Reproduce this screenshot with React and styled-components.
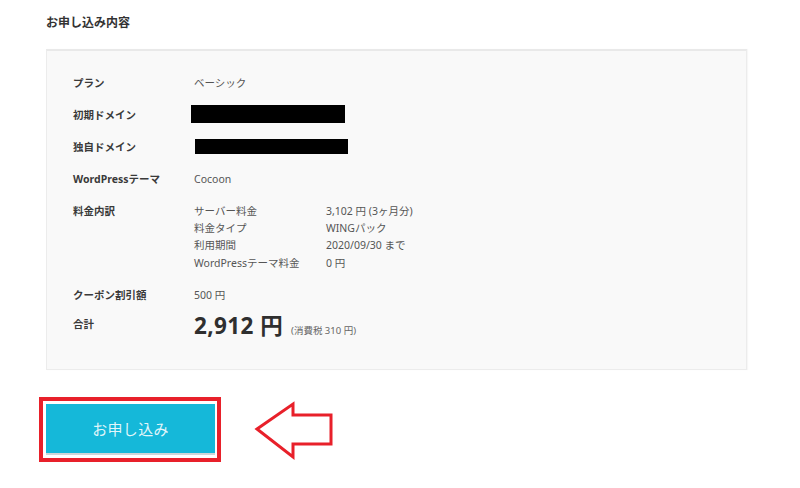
import React from "react";
import styled, { createGlobalStyle } from "styled-components";

const Global = createGlobalStyle`
  html, body { margin: 0; padding: 0; background: #fff; }
  body { font-family: "Noto Sans", "Noto Sans CJK JP", sans-serif; color: #333; }
`;

const Page = styled.div`
  width: 800px;
  height: 488px;
  box-sizing: border-box;
  padding: 14px 0 0 46px;
  overflow: hidden;
`;

const Title = styled.h2`
  margin: 0;
  font-size: 12px;
  line-height: 18px;
  font-weight: 700;
  color: #333;
`;

const Panel = styled.section`
  margin-top: 17px;
  width: 701px;
  box-sizing: border-box;
  background: #f9f9f9;
  border: 1px solid #ececec;
  border-top: 2px solid #e9e9e9;
  padding: 23px 0 28px 26px;
  display: flex;
  flex-direction: column;
  gap: 14px;
  box-shadow: 1px 0 1px rgba(0, 0, 0, 0.03);
`;

const Row = styled.div`
  display: flex;
  align-items: ${(p) => (p.$top ? "flex-start" : "center")};
  min-height: 18px;
  margin-top: ${(p) => p.$mt || 0}px;
`;

const Label = styled.div`
  width: 121px;
  flex: none;
  font-size: 10.5px;
  line-height: 18px;
  font-weight: 700;
  color: #3a3a3a;
`;

const Value = styled.div`
  font-size: 10.5px;
  line-height: 18px;
  color: #555;
`;

const Redacted = styled.div`
  background: #000;
  width: ${(p) => p.$w}px;
  height: ${(p) => p.$h}px;
  margin-left: ${(p) => p.$dx}px;
  margin-top: ${(p) => p.$dy}px;
`;

const Breakdown = styled.div`
  display: grid;
  grid-template-columns: 132px auto;
  font-size: 10.5px;
  line-height: 17.4px;
  color: #555;
  margin-top: 0.5px;
`;

const Total = styled.div`
  display: flex;
  align-items: baseline;
  margin-top: -4px;
  color: #2f2f2f;
`;

const Price = styled.span`
  font-size: 22.5px;
  line-height: 30px;
  font-weight: 700;
  letter-spacing: 0.4px;
`;

const Tax = styled.span`
  font-size: 9.5px;
  color: #666;
  margin-left: 8px;
`;

const ActionRow = styled.div`
  display: flex;
  align-items: flex-start;
  gap: 31px;
  margin-top: 27px;
  margin-left: -7px;
`;

const Highlight = styled.div`
  border: 4px solid #e8202a;
  padding: 3px 2px 3px 3px;
  background: #fff;
`;

const Button = styled.button`
  display: block;
  width: 169px;
  height: 49px;
  border: none;
  background: #15b8d9;
  box-shadow: 0 2px 0 #cfd6d8;
  color: rgba(255, 255, 255, 0.88);
  font-family: "Noto Sans CJK JP", sans-serif;
  font-size: 15px;
  letter-spacing: 0.3px;
  cursor: pointer;
  margin-bottom: 2px;
`;

const Arrow = styled.svg`
  display: block;
  margin-top: 4px;
`;

export default function App() {
  return (
    <>
      <Global />
      <Page>
        <Title>お申し込み内容</Title>
        <Panel>
          <Row>
            <Label>プラン</Label>
            <Value>ベーシック</Value>
          </Row>
          <Row>
            <Label>初期ドメイン</Label>
            <Redacted $w={154} $h={18} $dx={-3} $dy={-3} />
          </Row>
          <Row>
            <Label>独自ドメイン</Label>
            <Redacted $w={153} $h={15} $dx={1} $dy={-2} />
          </Row>
          <Row>
            <Label>WordPressテーマ</Label>
            <Value>Cocoon</Value>
          </Row>
          <Row $top>
            <Label>料金内訳</Label>
            <Breakdown>
              <span>サーバー料金</span>
              <span>3,102 円 (3ヶ月分)</span>
              <span>料金タイプ</span>
              <span>WINGパック</span>
              <span>利用期間</span>
              <span>2020/09/30 まで</span>
              <span>WordPressテーマ料金</span>
              <span>0 円</span>
            </Breakdown>
          </Row>
          <Row>
            <Label>クーポン割引額</Label>
            <Value>500 円</Value>
          </Row>
          <Row $top $mt={-3}>
            <Label>合計</Label>
            <Total>
              <Price>2,912 円</Price>
              <Tax>(消費税 310 円)</Tax>
            </Total>
          </Row>
        </Panel>
        <ActionRow>
          <Highlight>
            <Button>お申し込み</Button>
          </Highlight>
          <Arrow width="82" height="60" viewBox="0 0 82 60">
            <polygon
              points="5,28 41,3 41,14 79,14 79,43 41,43 41,56"
              fill="#fff"
              stroke="#e8202a"
              strokeWidth="3"
              strokeLinejoin="miter"
            />
          </Arrow>
        </ActionRow>
      </Page>
    </>
  );
}
